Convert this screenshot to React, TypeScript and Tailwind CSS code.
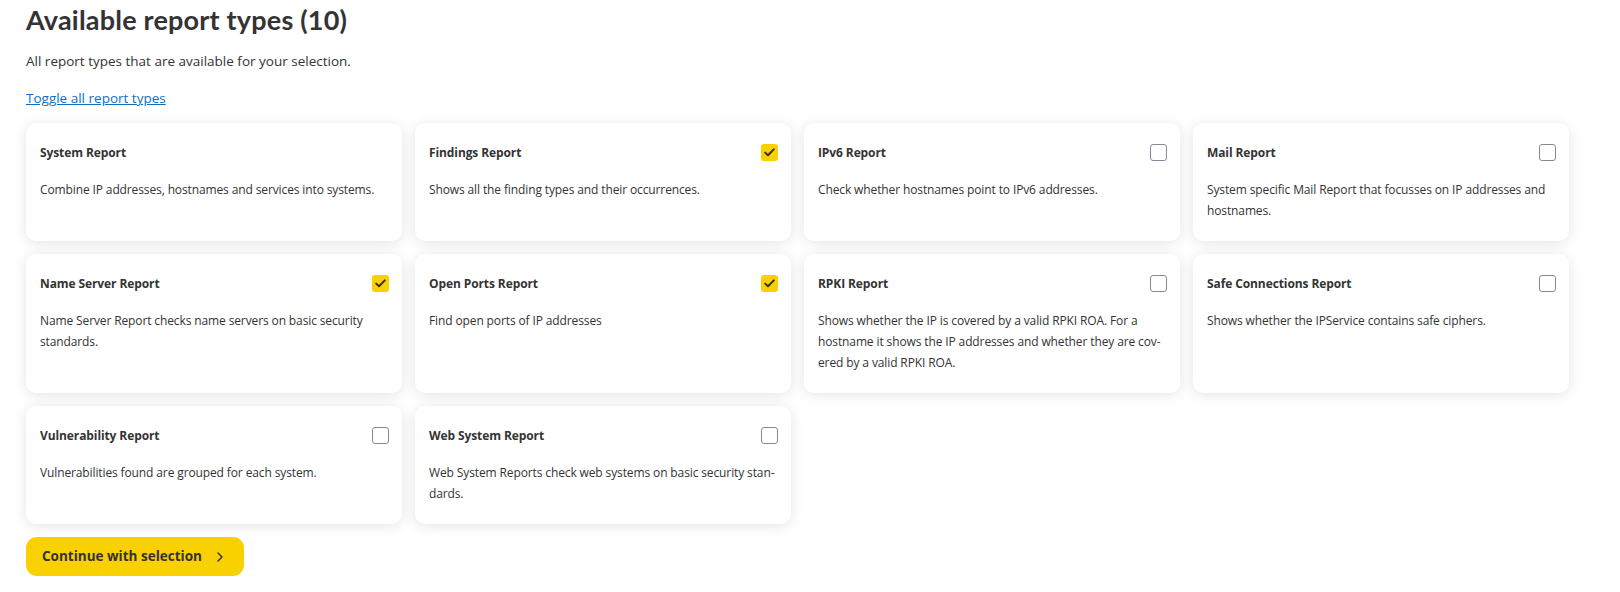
import { ChevronRight } from 'lucide-react';

interface ReportType {
  name: string;
  description: string;
  checked: boolean;
  selectable?: boolean;
}

const reportTypes: ReportType[] = [
  { name: 'System Report', description: 'Combine IP addresses, hostnames and services into systems.', checked: false, selectable: false },
  { name: 'Findings Report', description: 'Shows all the finding types and their occurrences.', checked: true },
  { name: 'IPv6 Report', description: 'Check whether hostnames point to IPv6 addresses.', checked: false },
  { name: 'Mail Report', description: 'System specific Mail Report that focusses on IP addresses and hostnames.', checked: false },
  { name: 'Name Server Report', description: 'Name Server Report checks name servers on basic security standards.', checked: true },
  { name: 'Open Ports Report', description: 'Find open ports of IP addresses', checked: true },
  {
    name: 'RPKI Report',
    description:
      'Shows whether the IP is covered by a valid RPKI ROA. For a hostname it shows the IP addresses and whether they are cov\u00ADered by a valid RPKI ROA.',
    checked: false,
  },
  { name: 'Safe Connections Report', description: 'Shows whether the IPService contains safe ciphers.', checked: false },
  { name: 'Vulnerability Report', description: 'Vulnerabilities found are grouped for each system.', checked: false },
  { name: 'Web System Report', description: 'Web System Reports check web systems on basic security stan\u00ADdards.', checked: false },
];

function Checkbox({ checked }: { checked: boolean }) {
  if (checked) {
    return (
      <span className="flex h-[17px] w-[17px] shrink-0 items-center justify-center rounded-[3px] bg-[#f9d000]">
        <svg width="11" height="9" viewBox="0 0 11 9" fill="none">
          <path d="M1.2 4.6 L4 7.3 L9.8 1.4" stroke="#3b3100" strokeWidth="2" strokeLinecap="round" strokeLinejoin="round" />
        </svg>
      </span>
    );
  }
  return <span className="h-[17px] w-[17px] shrink-0 rounded-[3px] border border-[#8b8799] bg-white" />;
}

function ReportCard({ report }: { report: ReportType }) {
  return (
    <div className="rounded-[10px] bg-white pt-[21px] pb-5 pl-[14px] pr-[13px] shadow-[0_2px_14px_rgba(0,0,0,0.11)]">
      <div className="mb-[18px] flex h-[17px] items-center justify-between">
        <span className="text-[12px] font-bold tracking-[-0.1px] text-[#333333]">{report.name}</span>
        {report.selectable !== false && <Checkbox checked={report.checked} />}
      </div>
      <p className="text-[12px] leading-[21px] tracking-[-0.12px] text-[#333333] hyphens-manual">{report.description}</p>
    </div>
  );
}

export default function App() {
  return (
    <div lang="en" className="min-h-[592px] bg-white pl-[26px] font-['Open_Sans',sans-serif] text-[#333333]">
      <h1 className="pt-[3px] font-['Lato',sans-serif] text-[27px] leading-[34px] font-bold tracking-[0.2px] text-[#333333]">
        Available report types (10)
      </h1>
      <p className="mt-[14px] text-[13.5px] leading-[20px]">All report types that are available for your selection.</p>
      <a href="#" className="mt-[17px] inline-block text-[13.5px] leading-[20px] text-[#0b6fc4] underline">
        Toggle all report types
      </a>
      <div className="mt-[14px] grid w-[1543px] grid-cols-4 gap-x-[13px] gap-y-[13px]">
        {reportTypes.map((r) => (
          <ReportCard key={r.name} report={r} />
        ))}
      </div>
      <button className="mt-[13px] flex h-[39px] items-center gap-[10px] rounded-[11px] bg-[#f9d000] pl-[16px] pr-[16px] text-[13.5px] font-bold text-[#333333]">
        Continue with selection
        <ChevronRight size={16} strokeWidth={2.2} />
      </button>
    </div>
  );
}
